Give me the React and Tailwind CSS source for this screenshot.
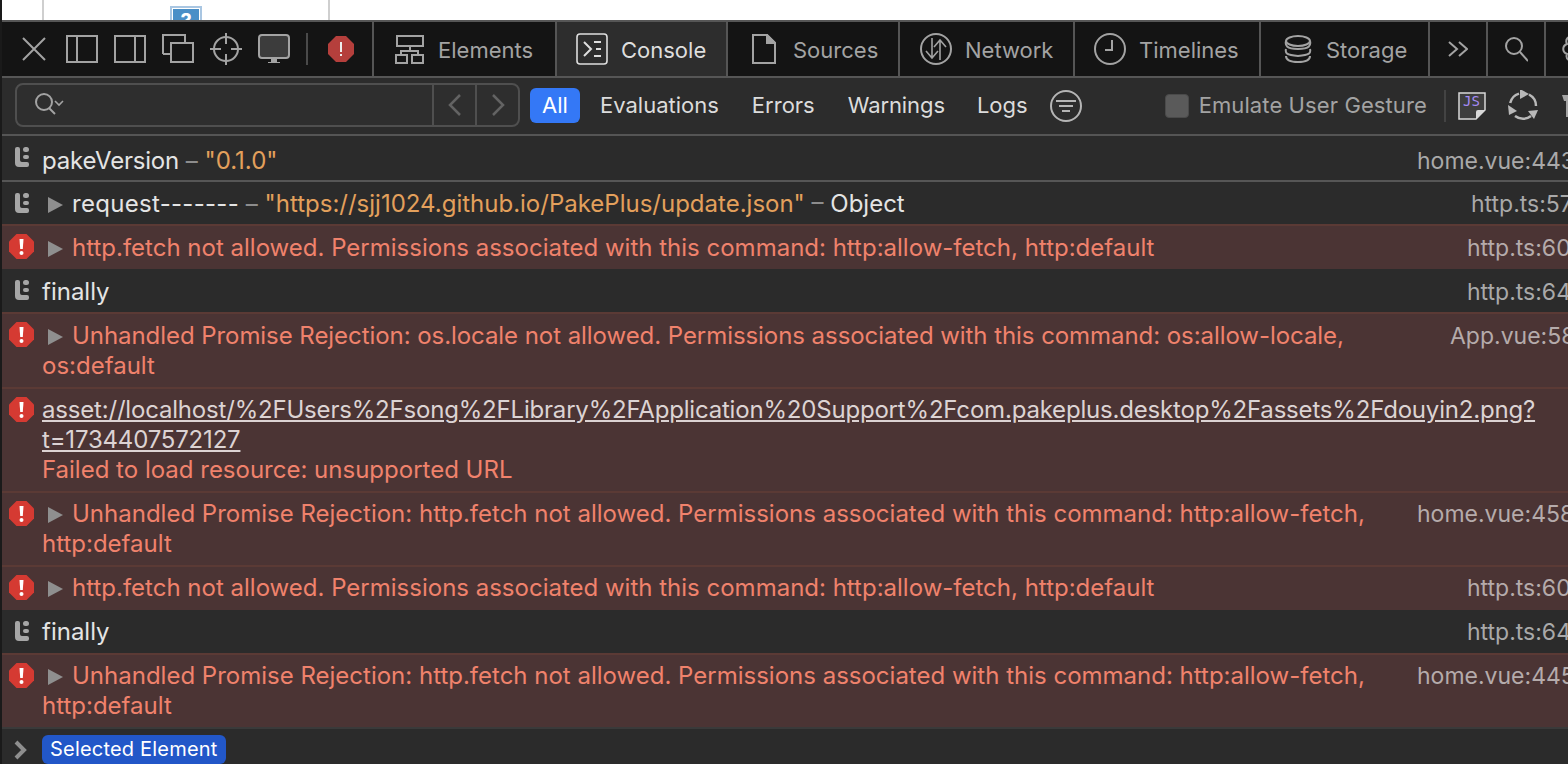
const font = "font-['Inter','Liberation_Sans',sans-serif]";

function Tb({ children, w = 32, h = 32, vb, className = "text-[#a3a3a3]" }) {
  return (
    <svg width={w} height={h} viewBox={vb || `0 0 ${w} ${h}`} fill="none" stroke="currentColor" strokeWidth="2" className={`shrink-0 ${className}`}>
      {children}
    </svg>
  );
}

const ToolIcons = () => (
  <div className="flex items-center h-full">
    <div className="w-[26px] ml-[19px] flex">
      <Tb w={26} h={26}><path d="M2 2 L24 24 M24 2 L2 24" /></Tb>
    </div>
    <div className="ml-[19px] flex">
      <Tb w={32} h={28}><rect x="1" y="1" width="30" height="26" /><path d="M11 1 V27" /></Tb>
    </div>
    <div className="ml-[16px] flex">
      <Tb w={32} h={28}><rect x="1" y="1" width="30" height="26" /><path d="M21 1 V27" /></Tb>
    </div>
    <div className="ml-[16px] flex">
      <Tb w={32} h={30}>
        <path d="M1 20 V1 H23 V9" />
        <path d="M1 20 H9" />
        <rect x="9" y="9" width="22" height="19" />
      </Tb>
    </div>
    <div className="ml-[16px] flex">
      <Tb w={32} h={32}>
        <circle cx="16" cy="16" r="12" />
        <path d="M16 0 V11 M16 21 V32 M0 16 H11 M21 16 H32" />
      </Tb>
    </div>
    <div className="ml-[16px] flex">
      <Tb w={32} h={30}>
        <rect x="1" y="1" width="30" height="23" rx="3" fill="#3c3c3c" />
        <path d="M13 25 H19 V28 H22 V29 H10 V28 H13 Z" fill="currentColor" stroke="none" />
      </Tb>
    </div>
    <div className="ml-[16px] w-[2px] h-[32px] bg-[#4a4a4a]" />
    <div className="ml-[20px] flex">
      <svg width="26" height="26" viewBox="0 0 26 26">
        <path d="M8 0 H18 L26 8 V18 L18 26 H8 L0 18 V8 Z" fill="#b53f3c" />
        <rect x="12" y="6" width="2" height="10" fill="#eee" />
        <rect x="12" y="18" width="2" height="2" fill="#eee" />
      </svg>
    </div>
  </div>
);

function Tab({ w, pl, icon, label, active }) {
  return (
    <div className={`${w} ${pl} ${active ? "bg-[#2d2d2d] text-[#dedede]" : "text-[#a3a3a3]"} h-full shrink-0 flex items-center border-l-2 border-[#555]`}>
      {icon}
      {label && <span className="pt-[2px]">{label}</span>}
    </div>
  );
}

const Triangle = () => (
  <svg width="15" height="16" viewBox="0 0 15 16" className="inline-block mr-[9px] ml-[6px] align-[-1px]">
    <path d="M0 0 L15 8 L0 16 Z" fill="#8f8f8f" />
  </svg>
);

const LogIcon = () => (
  <svg width="16" height="20" viewBox="0 0 16 20">
    <path d="M1 2 Q1 0 3 0 H4 Q6 0 6 2 V13 Q6 15 8 15 H13 Q15 15 15 17 V18 Q15 20 13 20 H5 Q1 20 1 16 Z" fill="#a6a6a6" />
    <rect x="9" y="0" width="6" height="5" rx="2.5" fill="#a6a6a6" />
    <rect x="9" y="8" width="6" height="4" rx="2" fill="#a6a6a6" />
  </svg>
);

const ErrIcon = () => (
  <svg width="25" height="25" viewBox="0 0 25 25">
    <path d="M7.5 0 H17.5 L25 7.5 V17.5 L17.5 25 H7.5 L0 17.5 V7.5 Z" fill="#d53a32" />
    <path d="M10.5 5 H14.5 L13.8 15 H11.2 Z" fill="#fff" />
    <circle cx="12.5" cy="19" r="2" fill="#fff" />
  </svg>
);

function Row({ h, kind, src, srcW, children, border, pt }) {
  const err = kind === "err";
  const top = pt || (err ? "pt-[6px]" : "pt-[8px]");
  return (
    <div className={`${h} ${err ? "bg-[#4b3434] border-t-2 border-[#5b3a35]" : border || ""} flex shrink-0 overflow-hidden text-[24px]`}>
      <div className={`w-[40px] shrink-0 flex justify-center ${err ? "pt-[8px] pr-[2px]" : "pt-[11px]"}`}>
        {err ? <ErrIcon /> : <LogIcon />}
      </div>
      <div className={`flex-1 min-w-0 whitespace-nowrap ${top} ${err ? "text-[#f0826c]" : "text-[#e4e4e4]"} leading-[30px]`}>
        {children}
      </div>
      {src && (
        <div className={`${srcW} ${top} shrink-0 whitespace-nowrap overflow-hidden text-[23px] leading-[30px] ${err ? "text-[#b5abab]" : "text-[#a9a9a9]"}`}>
          {src}
        </div>
      )}
    </div>
  );
}

const Dash = () => <span className="text-[#8d8d8d]"> – </span>;
const Or = ({ children }) => <span className="text-[#e3a05c]">{children}</span>;

export default function App() {
  return (
    <div className={`${font} w-[1568px] h-[764px] overflow-hidden flex flex-col border-l-2 border-[#1a1a1a] bg-[#2b2b2b] text-[22px] antialiased`}>
      {/* page above */}
      <div className="h-[20px] shrink-0 bg-white flex overflow-hidden">
        <div className="ml-[40px] w-[288px] h-full border-x-2 border-[#cfcfcf]">
          <div className="ml-[126px] mt-[6px] w-[32px] h-[30px] border-[2px] border-[#a9c6e2] p-[1px]">
            <div className="h-full bg-[#4a8fc7] text-white text-[20px] leading-[24px] text-center font-bold">?</div>
          </div>
        </div>
      </div>

      {/* tab bar */}
      <div className="h-[58px] shrink-0 bg-[#141414] border-y-2 border-[#565656] flex items-center overflow-hidden">
        <div className="w-[370px] shrink-0 h-full">
          <ToolIcons />
        </div>
        <Tab w="w-[183px]" pl="pl-[21px]" label="Elements" icon={
          <Tb w={30} h={30} className="text-[#a3a3a3] mr-[13px]"><rect x="2" y="2" width="26" height="10" /><rect x="1" y="21" width="11" height="8" /><rect x="17" y="21" width="11" height="8" /><path d="M15 12 V17 M6 21 V17 H23 V21" /></Tb>
        } />
        <Tab w="w-[171px]" pl="pl-[19px]" active label="Console" icon={
          <Tb w={32} h={32} className="text-[#dedede] mr-[13px]"><rect x="1" y="1" width="30" height="30" rx="3" strokeWidth="1.6"/><path d="M8 9 L15 16 L8 23 M18 9 H25 M20 16 H25 M18 23 H25" /></Tb>
        } />
        <Tab w="w-[172px]" pl="pl-[24px]" label="Sources" icon={
          <Tb w={24} h={30} className="text-[#a3a3a3] mr-[17px]"><path d="M1 1 H15 L23 9 V29 H1 Z" /><path d="M15 1 V9 H23 Z" fill="currentColor" /></Tb>
        } />
        <Tab w="w-[175px]" pl="pl-[20px]" label="Network" icon={
          <Tb w={32} h={32} className="text-[#a3a3a3] mr-[13px]"><circle cx="16" cy="16" r="15" /><path d="M12 5 V24 M6 18 L12 25 L18 18 M20 27 V8 M14 14 L20 7 L26 14" strokeWidth="1.6" /></Tb>
        } />
        <Tab w="w-[186px]" pl="pl-[19px]" label="Timelines" icon={
          <Tb w={32} h={32} className="text-[#a3a3a3] mr-[13px]"><circle cx="16" cy="16" r="15" /><path d="M18 7 V17 H11" /></Tb>
        } />
        <Tab w="w-[169px]" pl="pl-[23px]" label="Storage" icon={
          <Tb w={28} h={28} className="text-[#a3a3a3] mr-[14px]"><ellipse cx="14" cy="6" rx="12" ry="5" /><path d="M2 6 C1 10 2 14 14 14 C26 14 27 10 26 6 M2 14 C1 18 2 20 14 21 C26 20 27 18 26 14 M2 21 C2 25 5 27 14 27 C23 27 26 25 26 21" /></Tb>
        } />
        <Tab w="w-[58px]" pl="pl-[18px]" label="" icon={
          <Tb w={20} h={16} className="text-[#a3a3a3]"><path d="M1 1 L9 8 L1 15 M11 1 L19 8 L11 15" /></Tb>
        } />
        <Tab w="w-[58px]" pl="pl-[16px]" label="" icon={
          <Tb w={24} h={26} className="text-[#a3a3a3]"><circle cx="10" cy="10" r="8" /><path d="M16 16 L24 25" /></Tb>
        } />
        <Tab w="w-[40px]" pl="pl-[15px]" label="" icon={
          <Tb w={28} h={30} className="text-[#a3a3a3]"><path d="M14 2 C6 2 4 6 6 10 C1 12 1 18 6 20 C4 25 9 28 14 27 C20 28 26 25 24 20 C28 18 28 12 24 10 C26 6 20 2 14 2 M14 2 V27" /></Tb>
        } />
      </div>

      {/* filter bar */}
      <div className="h-[58px] shrink-0 bg-[#2c2c2c] border-b-2 border-[#555] flex items-center overflow-hidden">
        <div className="ml-[13px] w-[505px] h-[44px] shrink-0 rounded-[8px] border-2 border-[#4f4f4f] bg-[#2e2e2e] flex mt-[-2px]">
          <div className="flex-1 flex items-center pl-[17px]">
            <svg width="32" height="24" viewBox="0 0 32 24" fill="none" stroke="#a3a3a3" strokeWidth="2">
              <circle cx="10" cy="9" r="8" />
              <path d="M15 15 L21 21" />
              <path d="M21 8 L25 12 L29 8" strokeWidth="1.6" />
            </svg>
          </div>
          <div className="w-[43px] border-l-2 border-[#4f4f4f] flex items-center justify-center">
            <svg width="14" height="24" viewBox="0 0 14 24" fill="none" stroke="#636363" strokeWidth="2.5"><path d="M12 2 L2 12 L12 22" /></svg>
          </div>
          <div className="w-[43px] border-l-2 border-[#4f4f4f] flex items-center justify-center">
            <svg width="14" height="24" viewBox="0 0 14 24" fill="none" stroke="#636363" strokeWidth="2.5"><path d="M2 2 L12 12 L2 22" /></svg>
          </div>
        </div>
        <div className="ml-[10px] w-[50px] h-[35px] shrink-0 rounded-[6px] bg-[#3478f6] text-white flex items-center justify-center mt-[-2px]">All</div>
        <div className="ml-[20px] text-[#dcdcdc] mt-[-2px]">Evaluations</div>
        <div className="ml-[33px] text-[#dcdcdc] mt-[-2px]">Errors</div>
        <div className="ml-[33px] text-[#dcdcdc] mt-[-2px] tracking-[-0.1px]">Warnings</div>
        <div className="ml-[32px] text-[#dcdcdc] mt-[-2px]">Logs</div>
        <div className="ml-[22px] flex shrink-0">
          <svg width="32" height="32" viewBox="0 0 32 32" fill="none" stroke="#b5b5b5" strokeWidth="2">
            <circle cx="16" cy="16" r="15" />
            <path d="M6 11 H26 M9 16 H23 M12 21 H20" />
          </svg>
        </div>
        <div className="ml-[83px] w-[24px] h-[24px] shrink-0 rounded-[4px] bg-[#5a5a5a] border border-[#4a4a4a]" />
        <div className="ml-[10px] text-[#a3a3a3] whitespace-nowrap tracking-[0.1px] mt-[-2px]">Emulate User Gesture</div>
        <div className="ml-[17px] w-[2px] h-[32px] shrink-0 bg-[#434343]" />
        <div className="ml-[12px] flex shrink-0">
          <svg width="28" height="28" viewBox="0 0 28 28" fill="none">
            <path d="M1 1 H27 V18 L18 27 H1 Z" fill="#3e3e3e" stroke="#d8d8d8" strokeWidth="1.5" />
            <path d="M27 18 L18 27 V20 Q18 18 20 18 Z" fill="#d8d8d8" />
            <text x="5" y="14" fontSize="14" fontWeight="500" fill="#a58cf5" fontFamily="'DejaVu Sans Mono', monospace">JS</text>
          </svg>
        </div>
        <div className="ml-[22px] flex shrink-0">
          <svg width="30" height="32" viewBox="0 0 30 32" fill="none" stroke="#b9b9b9" strokeWidth="2.5">
            <path d="M2.2 13 A13 13 0 0 1 11 3.6" />
            <path d="M21 4.5 A13 13 0 0 1 28 16" />
            <path d="M23 26 A13 13 0 0 1 7 26" />
            <path d="M12 -1 L21 4 L12 9 Z" fill="#b9b9b9" stroke="none" />
            <path d="M30 20 L26 29 L20 21 Z" fill="#b9b9b9" stroke="none" />
            <path d="M0 15 L9 21 L1 25 Z" fill="#b9b9b9" stroke="none" />
          </svg>
        </div>
        <div className="ml-[24px] flex shrink-0">
          <svg width="8" height="22" viewBox="0 0 8 22"><path d="M0 0 H8 V22 H4 V6 H2 Z" fill="#a3a3a3" /></svg>
        </div>
      </div>

      {/* rows */}
      <Row h="h-[46px]" border="border-b-2 border-[#565656]" pt="pt-[10px]" src="home.vue:443" srcW="w-[151px]">
        <span className="tracking-[-0.2px]">pakeVersion</span><Dash /><Or>"0.1.0"</Or>
      </Row>
      <Row h="h-[42px]" pt="pt-[7px]" src="http.ts:57" srcW="w-[97px]">
        <Triangle /><span className="tracking-[0.3px]">request-------</span><Dash /><Or>"https://sjj1024.github.io/PakePlus/update.json"</Or><Dash />Object
      </Row>
      <Row h="h-[45px]" kind="err" pt="pt-[7px]" src="http.ts:60" srcW="w-[101px]">
        <Triangle />http.fetch not allowed. Permissions associated with this command: http:allow-fetch, http:default
      </Row>
      <Row h="h-[43px]" src="http.ts:64" srcW="w-[101px]">finally</Row>
      <Row h="h-[75px]" kind="err" pt="pt-[7px]" src="App.vue:58" srcW="w-[118px]">
        <Triangle /><span className="tracking-[-0.06px]">Unhandled Promise Rejection: os.locale not allowed. Permissions associated with this command: os:allow-locale,</span><br />os:default
      </Row>
      <Row h="h-[104px]" kind="err">
        <span className="underline text-[#dcd3d3] tracking-[-0.19px]">asset://localhost/%2FUsers%2Fsong%2FLibrary%2FApplication%20Support%2Fcom.pakeplus.desktop%2Fassets%2Fdouyin2.png?<br />t=1734407572127</span><br />Failed to load resource: unsupported URL
      </Row>
      <Row h="h-[74px]" kind="err" src="home.vue:458" srcW="w-[151px]">
        <Triangle />Unhandled Promise Rejection: http.fetch not allowed. Permissions associated with this command: http:allow-fetch,<br />http:default
      </Row>
      <Row h="h-[45px]" kind="err" src="http.ts:60" srcW="w-[101px]">
        <Triangle />http.fetch not allowed. Permissions associated with this command: http:allow-fetch, http:default
      </Row>
      <Row h="h-[43px]" pt="pt-[7px]" src="http.ts:64" srcW="w-[101px]">finally</Row>
      <Row h="h-[74px]" kind="err" src="home.vue:445" srcW="w-[151px]">
        <Triangle />Unhandled Promise Rejection: http.fetch not allowed. Permissions associated with this command: http:allow-fetch,<br />http:default
      </Row>
      <div className="flex-1 flex items-start pt-[6px] border-t-2 border-[#3a3a3a] min-h-0">
        <div className="w-[40px] flex justify-center pr-[4px] pt-[5px]">
          <svg width="14" height="20" viewBox="0 0 14 20" fill="none" stroke="#8f8f8f" strokeWidth="4"><path d="M3 2 L11 10 L3 18" /></svg>
        </div>
        <div className="h-[29px] px-[8px] rounded-[6px] bg-[#2257c8] text-white text-[20px] tracking-[0.2px] leading-[29px] whitespace-nowrap">Selected Element</div>
      </div>
    </div>
  );
}
